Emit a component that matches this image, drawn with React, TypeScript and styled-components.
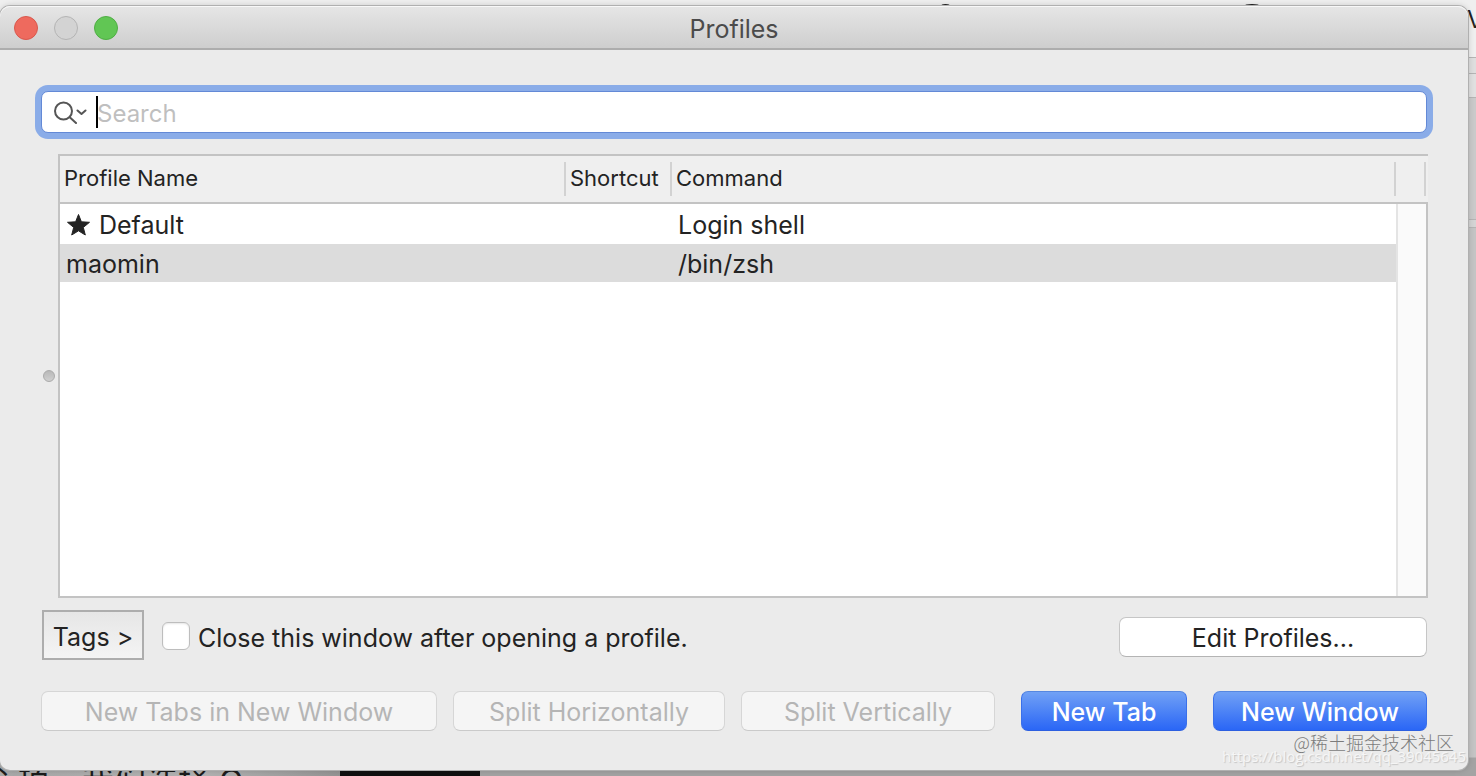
import React from "react";
import styled, { createGlobalStyle, css } from "styled-components";

const GlobalStyle = createGlobalStyle`
  *, *::before, *::after { box-sizing: border-box; }
  html, body { margin: 0; padding: 0; }
  body {
    overflow: hidden;
    font-family: Inter, Roboto, "Noto Sans CJK SC", sans-serif;
    color: #232323;
  }
  button, input { font-family: inherit; }
`;

const Desktop = styled.div`
  position: relative;
  display: flex;
  min-height: 100vh;
  padding: 6px 8px 6px 0;
  overflow: hidden;
  background: #efefef;
`;

/* Other applications that show round the edges of the dialog. */
const Backdrop = styled.div`
  position: absolute;
  inset: 0;
  display: flex;
  flex-direction: column;
  justify-content: space-between;
  overflow: hidden;
`;

const BrowserSide = styled.div`
  display: flex;
  flex-direction: column;
  flex: 1;
  align-self: flex-end;
  width: 24px;
`;

const SideBand = styled.div<{ $height?: number; $color: string }>`
  ${(p) => (p.$height ? css`height: ${p.$height}px;` : css`flex: 1;`)}
  flex-shrink: 0;
  border-bottom: 1px solid #b4b4b4;
  background: ${(p) => p.$color};
  font-size: 24px;
  line-height: 40px;
  padding-left: 15px;
  overflow: hidden;
`;

const BottomStrip = styled.div`
  display: flex;
  height: 18px;
  background: #a3a3a3;
  overflow: hidden;
`;

const ArticleText = styled.div`
  width: 340px;
  padding-top: 8px;
  background: linear-gradient(90deg, #a8a8a8, #b2b2b2 60%, #949494);
  color: #1c1c1c;
  font-size: 32px;
  line-height: 32px;
  text-indent: -14px;
  white-space: pre;
`;

const TerminalEdge = styled.div`
  width: 140px;
  background: #101010;
`;

const GlyphTop = styled.span<{ $left: number; $width: number }>`
  position: absolute;
  top: 4px;
  left: ${(p) => p.$left}px;
  width: ${(p) => p.$width}px;
  height: 4px;
  border-radius: 50% 50% 0 0;
  background: #222;
`;

const Window = styled.main`
  position: relative;
  flex: 1;
  display: flex;
  flex-direction: column;
  min-width: 0;
  border-radius: 10px;
  background: #ebebeb;
  box-shadow: 0 0 0 1px #b0b0b0, 0 0 6px rgba(0, 0, 0, 0.2);
`;

const TitleBar = styled.header`
  position: relative;
  display: flex;
  align-items: center;
  justify-content: center;
  height: 44px;
  border-bottom: 2px solid #adadad;
  border-radius: 10px 10px 0 0;
  background: linear-gradient(#e6e6e6, #cecece);
  box-shadow: inset 0 1px 0 #f8f8f8;
`;

const Title = styled.h1`
  margin: 0;
  padding-top: 3px;
  color: #4b4b4b;
  font-size: 25px;
  font-weight: 400;
  line-height: 32px;
`;

const TrafficLights = styled.div`
  position: absolute;
  top: 10px;
  left: 14px;
  display: flex;
  gap: 16px;
`;

const Light = styled.button<{ $fill: string; $edge: string }>`
  width: 24px;
  height: 24px;
  padding: 0;
  border: 1px solid ${(p) => p.$edge};
  border-radius: 50%;
  background: ${(p) => p.$fill};
`;

const Content = styled.div`
  flex: 1;
  display: flex;
  flex-direction: column;
  padding: 41px 41px 39px;
`;

const SearchBox = styled.label`
  display: flex;
  align-items: center;
  height: 42px;
  padding-left: 12px;
  border: 1px solid #6389d6;
  border-radius: 7px;
  background: #fff;
  box-shadow: 0 0 0 6px #8aace8;
`;

const SearchIcon = styled.svg`
  width: 34px;
  height: 24px;
  margin-right: 8px;
  fill: none;
  stroke: #555;
  stroke-width: 2;
  stroke-linecap: round;
  stroke-linejoin: round;
`;

const Caret = styled.span`
  width: 2px;
  height: 32px;
  margin-right: -1px;
  background: #000;
`;

const SearchInput = styled.input`
  flex: 1;
  min-width: 0;
  height: 36px;
  padding: 2px 0 0;
  border: 0;
  outline: 0;
  background: transparent;
  caret-color: transparent;
  font-size: 24px;
  &::placeholder { color: #bfbfbf; opacity: 1; }
`;

const SplitView = styled.section`
  flex: 1;
  display: flex;
  margin-top: 21px;
`;

const Splitter = styled.div`
  display: flex;
  align-items: center;
  width: 17px;
  padding-left: 2px;
  &::before {
    content: "";
    width: 12px;
    height: 12px;
    border: 1px solid #aaa;
    border-radius: 50%;
    background: linear-gradient(#b8b8b8, #cfcfcf);
  }
`;

const TableFrame = styled.div`
  flex: 1;
  display: flex;
  margin-right: -1px;
  border-left: 2px solid #c3c3c3;
  border-bottom: 2px solid #c3c3c3;
`;

const Table = styled.table`
  flex: 1;
  width: 100%;
  height: 100%;
  table-layout: fixed;
  border-collapse: separate;
  border-spacing: 0;
`;

const Col = styled.col<{ $width?: number }>`
  ${(p) => p.$width && css`width: ${p.$width}px;`}
`;

const HeadCell = styled.th`
  height: 50px;
  padding: 0;
  border-top: 2px solid #c3c3c3;
  border-bottom: 2px solid #c3c3c3;
  background: #efefef;
  font-size: 22px;
  font-weight: 400;
  text-align: left;
  &:last-child { padding-right: 2px; }
`;

const HeadLabel = styled.div`
  height: 34px;
  padding-left: 4px;
  border-right: 2px solid #d2d2d2;
  line-height: 32px;
  white-space: nowrap;
`;

const Row = styled.tr<{ $height?: number; $selected?: boolean }>`
  height: ${(p) => (p.$height ? `${p.$height}px` : "auto")};
  background: ${(p) => (p.$selected ? "#dcdcdc" : "#fff")};
`;

const Cell = styled.td`
  padding: 2px 0 0 6px;
  font-size: 25px;
  line-height: 32px;
  white-space: nowrap;
`;

const Gutter = styled.td`
  padding: 0;
  border-left: 2px solid #e4e4e4;
  border-right: 2px solid #c3c3c3;
  background: #fafafa;
`;

const NameWithStar = styled.span`
  display: flex;
  align-items: center;
  gap: 8px;
`;

const Star = styled.svg`
  width: 25px;
  height: 24px;
  fill: #232323;
  stroke: #232323;
  stroke-width: 1;
  stroke-linejoin: round;
`;

const OptionsRow = styled.div`
  display: flex;
  align-items: center;
  height: 50px;
  margin-top: 12px;
  padding-left: 1px;
`;

const TagsButton = styled.button`
  width: 102px;
  height: 50px;
  padding: 4px 0 0;
  border: 2px solid #adadad;
  background: linear-gradient(#e6e6e6, #f4f4f4);
  color: #232323;
  font-size: 25px;
  white-space: nowrap;
`;

const CheckLabel = styled.label`
  flex: 1;
  display: flex;
  align-items: center;
  gap: 8px;
  margin-left: 18px;
  padding-top: 2px;
  font-size: 25px;
  line-height: 32px;
  white-space: nowrap;
`;

const CheckText = styled.span`
  padding-top: 4px;
`;

const Checkbox = styled.input`
  appearance: none;
  width: 28px;
  height: 28px;
  margin: 0;
  border: 1px solid #bdbdbd;
  border-radius: 6px;
  background: #fff;
  box-shadow: inset 0 1px 2px rgba(0, 0, 0, 0.1);
`;

const PushButton = styled.button<{ $basis: number; $primary?: boolean; $fixed?: boolean }>`
  flex: ${(p) => (p.$fixed ? 0 : 1)} 1 ${(p) => p.$basis}px;
  height: 40px;
  padding: 2px 0 0;
  border: 1px solid #c6c6c6;
  border-bottom-color: #b4b4b4;
  border-radius: 7px;
  background: #fff;
  color: #232323;
  font-size: 25px;
  line-height: 32px;
  white-space: nowrap;
  ${(p) => p.$fixed && css`margin-top: 4px;`}
  &:disabled {
    border-color: #d6d6d6;
    border-bottom-color: #cacaca;
    background: #f5f5f5;
    color: #b5b5b5;
  }
  ${(p) =>
    p.$primary &&
    css`
      margin-left: 10px;
      border-color: #5687e0 #3a70ea #2c5fe0;
      background: linear-gradient(#71a1f5, #2a66f6);
      color: #fff;
      font-weight: 500;
    `}
`;

const ActionsRow = styled.div`
  display: flex;
  gap: 16px;
  margin-top: 31px;
`;

const Watermark = styled.div`
  position: absolute;
  right: 14px;
  bottom: 16px;
  color: #7c7c7c;
  font-family: "Noto Sans CJK SC", sans-serif;
  font-size: 18px;
  font-weight: 300;
  line-height: 24px;
`;

const SourceLink = styled.a`
  position: absolute;
  right: 2px;
  bottom: 4px;
  color: #f6f6f6;
  font-family: "Open Sans", sans-serif;
  font-size: 15px;
  line-height: 20px;
  text-decoration: none;
  text-shadow: 1px 1px 1px #c4c4c4;
`;

const profiles = [
  { name: "Default", command: "Login shell", height: 40, starred: true, selected: false },
  { name: "maomin", command: "/bin/zsh", height: 38, starred: false, selected: true },
];

export default function App() {
  return (
    <>
      <GlobalStyle />
      <Desktop>
        <Backdrop aria-hidden="true">
          <BrowserSide>
            <SideBand $height={58} $color="#efefef">V</SideBand>
            <SideBand $height={16} $color="#dedede" />
            <SideBand $height={24} $color="#e0e0e0" />
            <SideBand $height={122} $color="#cacaca" />
            <SideBand $height={8} $color="#d4d4d4" />
            <SideBand $color="#c4c4c4" />
          </BrowserSide>
          <BottomStrip>
            <ArticleText>心项，我们选择 O</ArticleText>
            <TerminalEdge />
          </BottomStrip>
          <GlyphTop $left={941} $width={9} />
          <GlyphTop $left={1244} $width={16} />
        </Backdrop>

        <Window>
          <TitleBar>
            <TrafficLights>
              <Light aria-label="Close" $fill="#ee6a5e" $edge="#d9584d" />
              <Light aria-label="Minimize" disabled $fill="#d3d3d3" $edge="#b4b4b4" />
              <Light aria-label="Zoom" $fill="#61c654" $edge="#4fae44" />
            </TrafficLights>
            <Title>Profiles</Title>
          </TitleBar>

          <Content>
            <SearchBox>
              <SearchIcon viewBox="0 0 34 24" aria-hidden="true">
                <circle cx="9.500" cy="11" r="8.500" />
                <path d="M16 17.500L22 23M23.500 10.500L27.500 14L31.500 10.500" />
              </SearchIcon>
              <Caret />
              <SearchInput type="text" placeholder="Search" aria-label="Search" />
            </SearchBox>

            <SplitView>
              <Splitter />
              <TableFrame>
                <Table>
                  <colgroup>
                    <Col $width={506} />
                    <Col $width={106} />
                    <Col />
                    <Col $width={32} />
                  </colgroup>
                  <thead>
                    <tr>
                      <HeadCell><HeadLabel>Profile Name</HeadLabel></HeadCell>
                      <HeadCell><HeadLabel>Shortcut</HeadLabel></HeadCell>
                      <HeadCell><HeadLabel>Command</HeadLabel></HeadCell>
                      <HeadCell><HeadLabel /></HeadCell>
                    </tr>
                  </thead>
                  <tbody>
                    {profiles.map((p) => (
                      <Row key={p.name} $height={p.height} $selected={p.selected}>
                        <Cell>
                          {p.starred ? (
                            <NameWithStar>
                              <Star viewBox="0 0 25 24" aria-hidden="true">
                                <path d="M12.500 1.500L15.400 8.800L23.500 9.300L17.300 14.400L19.300 22L12.500 17.800L5.700 22L7.700 14.400L1.500 9.300L9.600 8.800Z" />
                              </Star>
                              {p.name}
                            </NameWithStar>
                          ) : (
                            p.name
                          )}
                        </Cell>
                        <Cell />
                        <Cell>{p.command}</Cell>
                        <Gutter />
                      </Row>
                    ))}
                    <Row>
                      <td colSpan={3} />
                      <Gutter />
                    </Row>
                  </tbody>
                </Table>
              </TableFrame>
            </SplitView>

            <OptionsRow>
              <TagsButton>Tags &gt;</TagsButton>
              <CheckLabel>
                <Checkbox type="checkbox" />
                <CheckText>Close this window after opening a profile.</CheckText>
              </CheckLabel>
              <PushButton $basis={308} $fixed>Edit Profiles...</PushButton>
            </OptionsRow>

            <ActionsRow>
              <PushButton $basis={396} disabled>New Tabs in New Window</PushButton>
              <PushButton $basis={272} disabled>Split Horizontally</PushButton>
              <PushButton $basis={254} disabled>Split Vertically</PushButton>
              <PushButton $basis={166} $primary>New Tab</PushButton>
              <PushButton $basis={214} $primary>New Window</PushButton>
            </ActionsRow>
          </Content>

          <SourceLink href="https://blog.csdn.net/qq_39045645">https://blog.csdn.net/qq_39045645</SourceLink>
          <Watermark>@稀土掘金技术社区</Watermark>
        </Window>
      </Desktop>
    </>
  );
}
